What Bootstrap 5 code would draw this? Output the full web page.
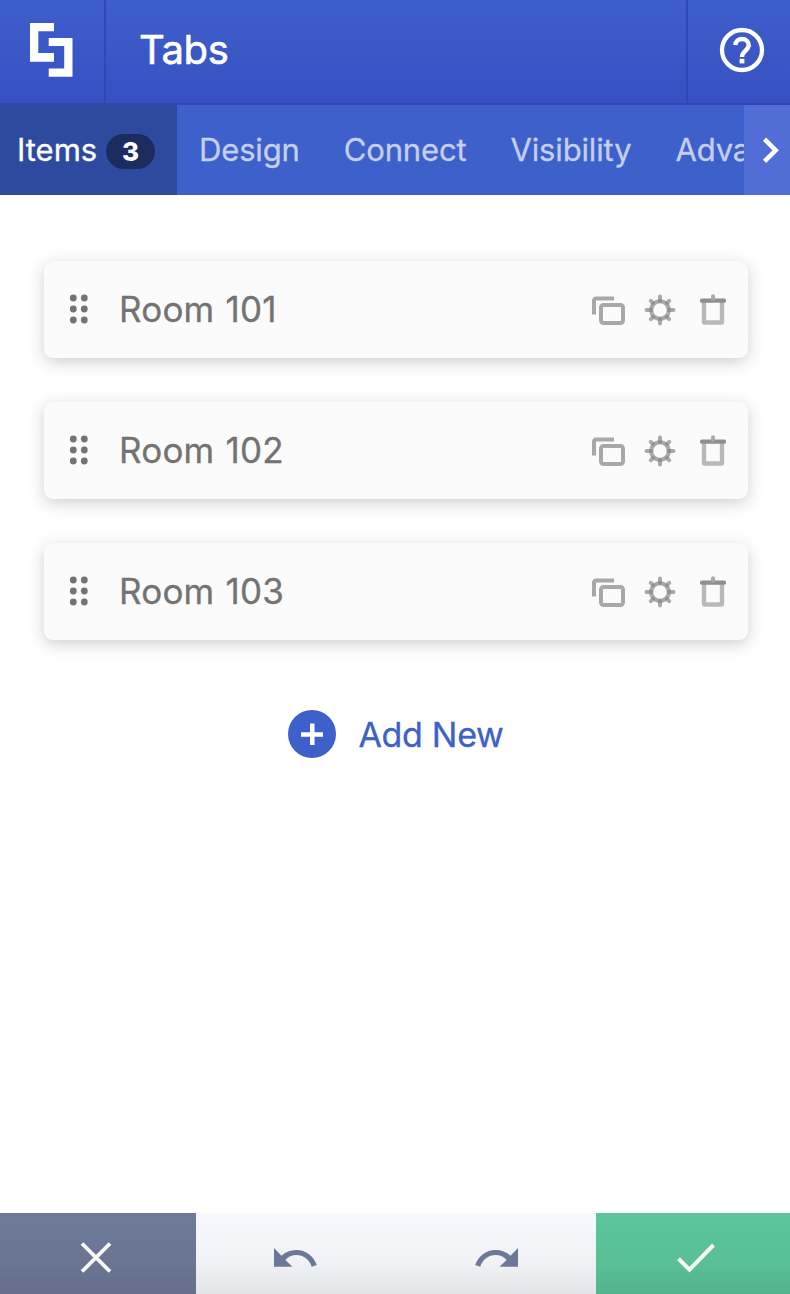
<!DOCTYPE html>
<html lang="en">
<head>
<meta charset="utf-8">
<meta name="viewport" content="width=device-width, initial-scale=1">
<title>Tabs</title>
<link rel="stylesheet" href="https://cdn.jsdelivr.net/npm/bootstrap@5.3.0/dist/css/bootstrap.min.css">
<style>
  body { font-family: Inter, sans-serif; -webkit-text-stroke: .3px currentColor; }
  svg { display: block; flex: none; }
  .topbar { height: 105px; background: linear-gradient(#3d5fcb, #3850c2); border-bottom: 2px solid #2f49b4; }
  .logo-cell { width: 106px; padding-bottom: 3px; border-right: 2px solid #2f49b4; }
  .help-cell { width: 104px; padding: 0 0 3px 6px; border-left: 2px solid #2f49b4; }
  .panel-title { font-size: 40px; -webkit-text-stroke: .6px currentColor; line-height: 1; padding: 0 0 3px 33px; letter-spacing: -.4px; }
  .tabbar { height: 90px; background: #3d60ca; }
  .tab-strip { min-width: 0; }
  .tab-link { padding: 1px 22px 0; font-size: 31px; letter-spacing: -.15px; color: #c5cfef; text-decoration: none; white-space: nowrap; flex: none; }
  .tab-link.current { color: #fff; background: #2e4a9f; padding-left: 17px; width: 177px; letter-spacing: 0; justify-content: space-between; }
  .count { width: 49px; height: 35px; margin-top: 1px; font: 800 26px/35px Inter, sans-serif; -webkit-text-stroke: 0; background: #1d2c5f; border-radius: 18px; text-align: center; }
  .tab-next { width: 46px; background: #536dd7; }
  .panel-body { padding: 66px 42px 0 44px; }
  .items { gap: 44px; }
  .item-row { height: 97px; padding-left: 25px; background: #fbfbfb; border-radius: 9px; box-shadow: 0 4px 16px rgba(0,0,0,.19); color: #737373; }
  .item-name { margin-left: 30px; font-size: 35px; letter-spacing: .2px; word-spacing: 1px; line-height: 1; }
  .i-grip { margin-bottom: 1px; }
  .i-copy { margin-right: 18px; margin-top: 2px; }
  .i-gear { margin-right: 24px; }
  .i-trash { margin-right: 22px; }
  .add-new { margin-top: 70px; color: #3d60ca; font-size: 34px; letter-spacing: -.3px; gap: 22px; line-height: 1; }
  .add-new span { padding-top: 1px; }
  .footer-bar { height: 81px; }
  .footer-bar svg { margin-top: 8px; }
  .act { background: linear-gradient(#f8f9fe, #f1f2f6 60%, #e3e4e7); }
  .act-cancel { width: 196px; padding-right: 5px; background: linear-gradient(#6d7a98, #6a7694 60%, #656e8a); }
  .act-save { width: 194px; padding-left: 6px; background: linear-gradient(#5cc59a, #59c096 60%, #54b38c); }
</style>
</head>
<body class="vh-100 d-flex flex-column bg-white overflow-hidden">
<svg width="0" height="0" class="position-absolute" aria-hidden="true">
  <symbol id="grip" viewBox="0 0 20 30"><g fill="#737373"><circle cx="4.3" cy="4" r="3.4"/><circle cx="15.3" cy="4" r="3.4"/><circle cx="4.3" cy="15" r="3.4"/><circle cx="15.3" cy="15" r="3.4"/><circle cx="4.3" cy="26" r="3.4"/><circle cx="15.3" cy="26" r="3.4"/></g></symbol>
  <symbol id="copy" viewBox="0 0 34 30"><g fill="none" stroke="#a8a8a8" stroke-width="4"><path d="M2 18.500V4.500a2 2 0 0 1 2-2H22"/><rect x="9" y="9" width="22" height="18" rx="2.500"/></g></symbol>
  <symbol id="gear" viewBox="0 0 32 32"><g fill="none" stroke="#828282" stroke-opacity=".68" stroke-width="4" stroke-linecap="round"><circle cx="16" cy="16" r="8.800"/><path d="M16 2.500v4.500M16 25v4.500M2.500 16h4.500M25 16h4.500M6.800 6.800l2 2M23.200 23.200l2 2M6.800 25.200l2-2M23.200 8.800l2-2"/></g></symbol>
  <symbol id="trash" viewBox="0 0 26 32"><path d="M4 8V28.500H22V8" fill="none" stroke="#b9b9b9" stroke-width="4.300" stroke-linejoin="round"/><path d="M2 6.700H24" stroke="#8f8f8f" stroke-width="4.300" stroke-linecap="round"/><path d="M13 4.700V2.200" stroke="#a9a9a9" stroke-width="4" stroke-linecap="round"/></symbol>
  <symbol id="undo" viewBox="0 0 44 20"><path fill="#6c7897" d="M0 0V18.700H18.500L11.400 12C14.200 9 18 7.100 22.300 7.100c7.300 0 13.300 4.800 15.500 11.600l5-1.600C40 8.200 31.800 2 22.300 2 16.500 2 11.400 4.200 7.500 7.700Z"/></symbol>
</svg>

<header class="topbar d-flex flex-shrink-0 text-white">
  <div class="logo-cell d-flex align-items-center ps-4">
    <svg class="ms-1" width="48" height="56" viewBox="28 22 48 56" fill="#fff"><path d="M30 23H54V31.300H38.300V53H54V61.700H30ZM48.700 38H72.500V76.800H48.700V68.500H64.200V46H48.700Z"/></svg>
  </div>
  <div class="panel-title flex-grow-1 d-flex align-items-center"><span>Tabs</span></div>
  <div class="help-cell d-flex align-items-center justify-content-center">
    <svg width="46" height="46" viewBox="0 0 46 46" fill="none" stroke="#fff"><circle cx="23" cy="23" r="20" stroke-width="4.300"/><path d="M16.300 18.200C16.500 14.500 19.300 12 23 12c3.900 0 6.700 2.600 6.700 6.200 0 5.200-6.700 5.800-6.700 11.800" stroke-width="4.400"/><path d="M23 31.800v4.600" stroke-width="4.800"/></svg>
  </div>
</header>

<nav class="tabbar d-flex flex-shrink-0">
  <div class="tab-strip d-flex flex-grow-1 overflow-hidden">
    <a class="tab-link current d-flex align-items-center" href="#"><span>Items</span><span class="count">3</span></a>
    <a class="tab-link d-flex align-items-center" href="#">Design</a>
    <a class="tab-link d-flex align-items-center" href="#">Connect</a>
    <a class="tab-link d-flex align-items-center" href="#">Visibility</a>
    <a class="tab-link d-flex align-items-center" href="#">Advanced</a>
  </div>
  <div class="tab-next d-flex align-items-center justify-content-center flex-shrink-0">
    <svg class="ms-2" width="20" height="28" viewBox="0 0 20 28" fill="none" stroke="#fff" stroke-width="4.500"><path d="M3.500 3.200 14.700 14.300 3.500 25.400"/></svg>
  </div>
</nav>

<main class="panel-body flex-grow-1">
  <div class="items d-flex flex-column">
    <div class="item-row d-flex align-items-center"><svg class="i-grip" width="20" height="30"><use href="#grip"/></svg><span class="item-name flex-grow-1">Room 101</span><svg class="i-copy" width="34" height="30"><use href="#copy"/></svg><svg class="i-gear" width="32" height="32"><use href="#gear"/></svg><svg class="i-trash" width="26" height="32"><use href="#trash"/></svg></div>
    <div class="item-row d-flex align-items-center"><svg class="i-grip" width="20" height="30"><use href="#grip"/></svg><span class="item-name flex-grow-1">Room 102</span><svg class="i-copy" width="34" height="30"><use href="#copy"/></svg><svg class="i-gear" width="32" height="32"><use href="#gear"/></svg><svg class="i-trash" width="26" height="32"><use href="#trash"/></svg></div>
    <div class="item-row d-flex align-items-center"><svg class="i-grip" width="20" height="30"><use href="#grip"/></svg><span class="item-name flex-grow-1">Room 103</span><svg class="i-copy" width="34" height="30"><use href="#copy"/></svg><svg class="i-gear" width="32" height="32"><use href="#gear"/></svg><svg class="i-trash" width="26" height="32"><use href="#trash"/></svg></div>
  </div>
  <div class="add-new d-flex align-items-center justify-content-center">
    <svg width="48" height="48" viewBox="0 0 48 48"><circle cx="24" cy="24" r="24" fill="#3d60ca"/><path d="M13 24.500H35M24.300 13.500V35" stroke="#fff" stroke-width="4.500"/></svg>
    <span>Add New</span>
  </div>
</main>

<footer class="footer-bar d-flex flex-shrink-0">
  <div class="act-cancel d-flex align-items-center justify-content-center"><svg width="32" height="32" viewBox="0 0 32 32" stroke="#fafafa" stroke-width="3.800"><path d="M2 1.500 30 29.500M30 1.500 2 29.500"/></svg></div>
  <div class="act flex-fill d-flex align-items-center justify-content-center"><svg width="44" height="20"><use href="#undo"/></svg></div>
  <div class="act flex-fill d-flex align-items-center justify-content-center"><svg width="44" height="20" viewBox="0 0 44 20"><g transform="matrix(-1 0 0 1 44 0)"><use href="#undo" width="44" height="20"/></g></svg></div>
  <div class="act-save d-flex align-items-center justify-content-center"><svg width="40" height="30" viewBox="0 0 40 30" fill="none" stroke="#fafafa" stroke-width="4"><path d="M2.500 15.800 13.500 26.600 37.500 2"/></svg></div>
</footer>
<script src="https://cdn.jsdelivr.net/npm/bootstrap@5.3.0/dist/js/bootstrap.bundle.min.js"></script>
</body>
</html>
